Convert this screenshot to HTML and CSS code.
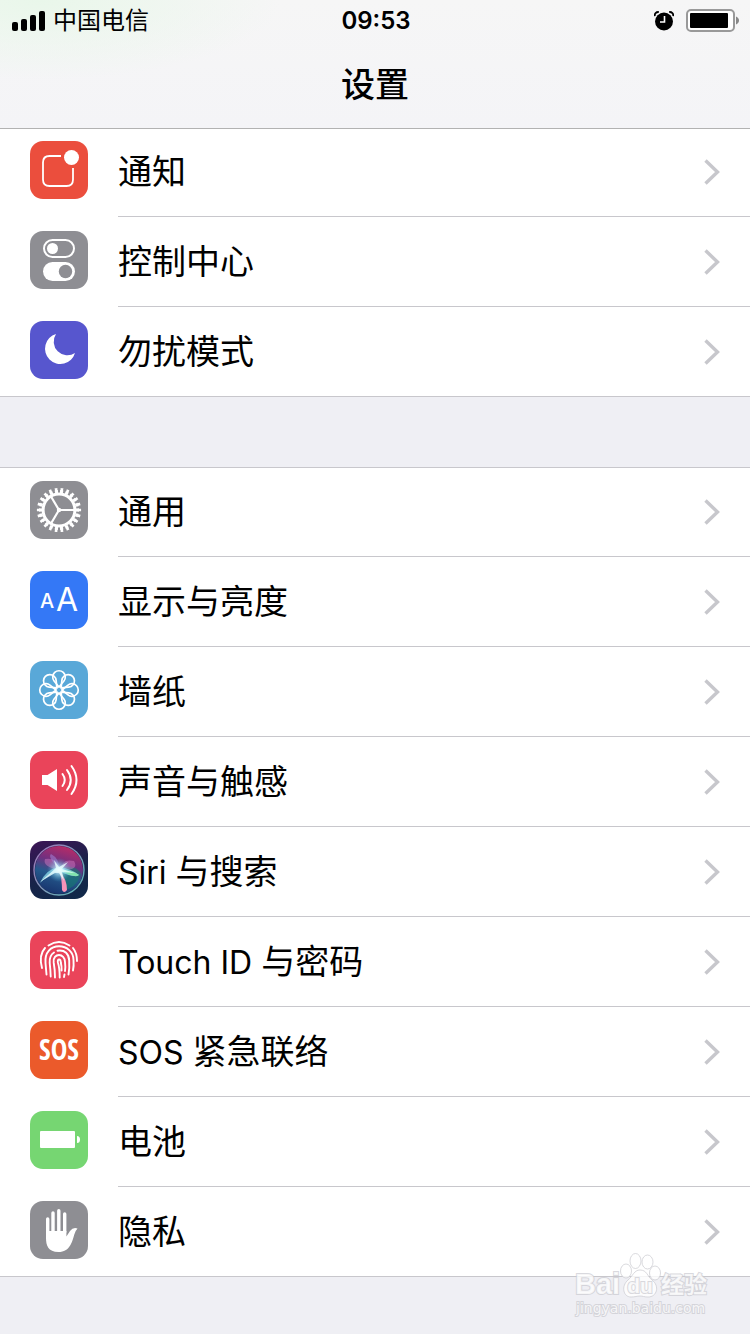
FILE: index.html
```html
<!DOCTYPE html>
<html lang="zh-CN">
<head>
<meta charset="utf-8">
<meta name="viewport" content="width=device-width, initial-scale=1">
<title>设置</title>
<link rel="stylesheet" href="styles.css">
</head>
<body>
<svg class="defs" aria-hidden="true">
  <defs>
    <symbol id="chevron" viewBox="0 0 18 28"><path d="M2.500 2.500 14.500 14 2.500 25.500" fill="none" stroke="#c7c7cc" stroke-width="3.400"/></symbol>
    <path id="petal" d="M29 26 24.100 20A6.300 6.300 0 1 1 33.900 20Z"/>
  </defs>
</svg>

<header class="header">
  <div class="status">
    <div class="status-left">
      <svg class="signal" viewBox="0 0 33 20" aria-hidden="true"><rect y="11" width="6" height="9" rx="2"/><rect x="9" y="8" width="6" height="12" rx="2"/><rect x="18" y="4" width="6" height="16" rx="2"/><rect x="27" width="6" height="20" rx="2"/></svg>
      <span class="carrier">中国电信</span>
    </div>
    <time class="clock">09:53</time>
    <div class="status-right">
      <svg class="alarm" viewBox="0 0 20 20" aria-hidden="true"><circle cx="10" cy="10.500" r="9"/><path d="M.8 5.200C.4 2.500 2 .8 4.800 1M19.200 5.200C19.600 2.500 18 .8 15.200 1" fill="none" stroke="#000" stroke-width="1.800"/><path d="M10.500 5v6H6" fill="none" stroke="#fff" stroke-width="1.600"/></svg>
      <svg class="battery" viewBox="0 0 54 24" aria-hidden="true"><rect x="1" y="1" width="47" height="21" rx="4" fill="#fff" stroke="#999" stroke-width="2"/><rect x="4" y="4" width="38" height="15" rx="1"/><path d="M50 7.500c4 1.500 4 6.500 0 8z" fill="#888"/></svg>
    </div>
  </div>
  <h1 class="title">设置</h1>
</header>

<main>
  <nav class="group group-top" aria-label="通知与模式">
    <a class="row" href="#notifications">
      <svg class="icon red" viewBox="0 0 58 58" aria-hidden="true"><path d="M31 15H19.500Q13 15 13 21.500v17q0 6.500 6.500 6.500h17q6.500 0 6.500-6.500V27" fill="none" stroke="#fff" stroke-width="1.800"/><circle cx="41.500" cy="16.500" r="7.500" fill="#fff"/></svg>
      <span class="label">通知</span><svg class="chevron" aria-hidden="true"><use href="#chevron"/></svg>
    </a>
    <a class="row" href="#control">
      <svg class="icon gray" viewBox="0 0 58 58" aria-hidden="true"><rect x="14" y="9" width="30" height="17" rx="8.500" fill="none" stroke="#fff" stroke-width="2"/><circle cx="22.500" cy="17.500" r="5.500" fill="#fff"/><rect x="13" y="31" width="32" height="19" rx="9.500" fill="#fff"/><circle cx="35.500" cy="40.500" r="6.700" fill="#8e8e93"/></svg>
      <span class="label">控制中心</span><svg class="chevron" aria-hidden="true"><use href="#chevron"/></svg>
    </a>
    <a class="row" href="#dnd">
      <svg class="icon purple" viewBox="0 0 58 58" aria-hidden="true"><path d="M26 13A15.300 15.300 0 1 0 45 32 13.700 13.700 0 0 1 26 13Z" fill="#fff"/></svg>
      <span class="label">勿扰模式</span><svg class="chevron" aria-hidden="true"><use href="#chevron"/></svg>
    </a>
  </nav>

  <nav class="group" aria-label="通用设置">
    <a class="row" href="#general">
      <svg class="icon gray" viewBox="0 0 58 58" aria-hidden="true"><g fill="none" stroke="#fff"><circle cx="29" cy="29" r="15.900" stroke-width="3"/><circle cx="29" cy="29" r="18.500" stroke-width="3" pathLength="220" stroke-dasharray="6 4" stroke-dashoffset="3"/><circle cx="29" cy="29" r="20.600" stroke-width="3" pathLength="220" stroke-dasharray="4.500 5.500" stroke-dashoffset="2.250"/><path d="M29 29H44.500M29 29 21 15.500M29 29 21 42.500" stroke-width="2.200"/></g><circle cx="29" cy="29" r="2.200" fill="#fff"/></svg>
      <span class="label">通用</span><svg class="chevron" aria-hidden="true"><use href="#chevron"/></svg>
    </a>
    <a class="row" href="#display">
      <svg class="icon blue" viewBox="0 0 58 58" aria-hidden="true"><text class="letter-small" x="10" y="37">A</text><text class="letter-large" x="26" y="40">A</text></svg>
      <span class="label">显示与亮度</span><svg class="chevron" aria-hidden="true"><use href="#chevron"/></svg>
    </a>
    <a class="row" href="#wallpaper">
      <svg class="icon sky" viewBox="0 0 58 58" aria-hidden="true"><g fill="none" stroke="#fff" stroke-width="1.700"><use href="#petal"/><use href="#petal" transform="rotate(45 29 29)"/><use href="#petal" transform="rotate(90 29 29)"/><use href="#petal" transform="rotate(135 29 29)"/><use href="#petal" transform="rotate(180 29 29)"/><use href="#petal" transform="rotate(225 29 29)"/><use href="#petal" transform="rotate(270 29 29)"/><use href="#petal" transform="rotate(315 29 29)"/><circle cx="29" cy="29" r="3.500"/></g></svg>
      <span class="label">墙纸</span><svg class="chevron" aria-hidden="true"><use href="#chevron"/></svg>
    </a>
    <a class="row" href="#sounds">
      <svg class="icon rose" viewBox="0 0 58 58" aria-hidden="true"><path d="M12 24h5.500L27 18v22l-9.500-6H12z" fill="#fff"/><path d="M32.500 23q4.500 6 0 12M37 19q7.500 10 0 20M41.500 15q10 14 0 28" fill="none" stroke="#fff" stroke-width="2" stroke-linecap="round"/></svg>
      <span class="label">声音与触感</span><svg class="chevron" aria-hidden="true"><use href="#chevron"/></svg>
    </a>
    <a class="row" href="#siri">
      <svg class="icon siri" viewBox="0 0 58 58" aria-hidden="true">
        <defs>
          <linearGradient id="orb" x1=".65" y1="0" x2=".35" y2="1"><stop stop-color="#b92b66"/><stop offset=".35" stop-color="#713080"/><stop offset=".6" stop-color="#25598c"/><stop offset="1" stop-color="#17336d"/></linearGradient>
          <linearGradient id="rim" x1="0" y1="0" x2="1" y2="1"><stop stop-color="#a471b8"/><stop offset="1" stop-color="#58b9b9"/></linearGradient>
          <radialGradient id="glow"><stop stop-color="#fff"/><stop offset=".3" stop-color="#bdf3ff" stop-opacity=".7"/><stop offset="1" stop-color="#48b6d8" stop-opacity="0"/></radialGradient>
        </defs>
        <circle cx="29" cy="29" r="24" fill="url(#orb)"/>
        <path d="M30 28Q47 22 51 34 45 48 34 49Z" fill="#177b72" opacity=".6"/>
        <path d="M30 29Q12 26 15 18q13-2 15 11Q32 17 44 20q6 10-14 9" fill="#d780c6" opacity=".45"/>
        <path d="M30 29Q17 16 21 13q8 4 9 16" fill="#a58be0" opacity=".5"/>
        <path d="M30 30Q20 32 10 42 16 28 29 26 42 28 49 34q-6 3-18-3" fill="#8fdcea" opacity=".75"/>
        <path d="M29 29q8 9 8 20-3 4-5 0 0-11-3-20Z" fill="#f793b8"/>
        <path d="M30 29q13 0 19 5-4 4-19-5" fill="#83e3ae"/>
        <circle cx="29" cy="29" r="12" fill="url(#glow)"/>
        <path d="M10 41 26 27l-2-8 5 7 9-5-6 7 13 4-13-1 2 9-5-8-4 0Z" fill="#e8ffff" opacity=".8"/>
        <circle cx="29" cy="29" r="25" fill="none" stroke="url(#rim)" stroke-width="1.400"/>
      </svg>
      <span class="label"><span class="latin">Siri </span>与搜索</span><svg class="chevron" aria-hidden="true"><use href="#chevron"/></svg>
    </a>
    <a class="row" href="#touchid">
      <svg class="icon rose" viewBox="0 0 58 58" aria-hidden="true"><g fill="none" stroke="#fff" stroke-width="1.900" stroke-linecap="round"><path d="M18.500 14.500Q29 7.500 39.500 14.500"/><path d="M15 17Q8.500 24 12 37"/><path d="M43 17Q47 22 47 30"/><path d="M16.500 43.500Q16 38 15.500 32C14.500 21 21 15.300 29 15.300S43.500 21 43.500 29q.5 6-.5 10.500"/><path d="M20.700 45.500Q20.500 39 19.700 32q-.5-7.500 4.300-10.500M27.500 19.700C35 18.500 39 23 39.200 29.500q.5 8-.7 14"/><path d="M25 46.500Q25 39 23.700 31.500C23 26.500 26 24 29 24s6 2.500 6 7q.7 6 0 9"/><path d="M29.700 46.500Q29.700 37 27.900 31.500q-.5-3 1.300-3 1.500 0 1.600 3 1 4 .8 8M34.500 43.500l-.5 2.500"/></g></svg>
      <span class="label"><span class="latin">Touch ID </span>与密码</span><svg class="chevron" aria-hidden="true"><use href="#chevron"/></svg>
    </a>
    <a class="row" href="#sos">
      <svg class="icon orange" viewBox="0 0 58 58" aria-hidden="true"><text class="sos" x="29" y="39" text-anchor="middle">SOS</text></svg>
      <span class="label"><span class="latin">SOS </span>紧急联络</span><svg class="chevron" aria-hidden="true"><use href="#chevron"/></svg>
    </a>
    <a class="row" href="#battery">
      <svg class="icon green" viewBox="0 0 58 58" aria-hidden="true"><rect x="10" y="20" width="35" height="17" rx="1" fill="#fff"/><path d="M47 25q3 0 3 3.500T47 32z" fill="#fff"/></svg>
      <span class="label">电池</span><svg class="chevron" aria-hidden="true"><use href="#chevron"/></svg>
    </a>
    <a class="row" href="#privacy">
      <svg class="icon gray" viewBox="0 0 58 58" aria-hidden="true"><path d="M17.700 18v16M23 12v20M28.800 9.800v20M34.700 13v18" stroke="#fff" stroke-width="3.400" stroke-linecap="round"/><path d="M16 30h20.400v5.500L40 30q3-4 7.500-2.500-2 2-3.200 6C42 41 40 51 28.500 51 18 51 16 44 16 37Z" fill="#fff"/></svg>
      <span class="label">隐私</span><svg class="chevron" aria-hidden="true"><use href="#chevron"/></svg>
    </a>
  </nav>
</main>

<svg class="watermark" viewBox="0 0 140 68" role="img" aria-label="Baidu 经验">
  <g class="mark">
    <ellipse cx="54" cy="21" rx="5.500" ry="7"/><ellipse cx="63.500" cy="11" rx="5.500" ry="7.500"/><ellipse cx="75.500" cy="12" rx="5.500" ry="7"/><ellipse cx="83" cy="23" rx="5.500" ry="7"/>
    <path d="M68 20c7 0 7 6 12 10 8 6 5 17-4 17-4 0-5-1-8-1s-5 1-9 1c-8 0-10-11-3-17 5-4 6-10 12-10Z"/>
    <text class="mark-name" x="3" y="44">Bai</text>
    <text class="mark-du" x="68" y="43" text-anchor="middle">du</text>
    <text class="mark-cn" x="89" y="43">经验</text>
    <text class="mark-url" x="4" y="63">jingyan.baidu.com</text>
  </g>
</svg>
</body>
</html>
```

FILE: styles.css
```css
* { box-sizing: border-box; }

body {
  position: relative;
  min-height: 100vh;
  margin: 0;
  background: #efeff4;
  color: #000;
  font-family: Inter, "Noto Sans CJK SC", sans-serif;
}

.defs { position: absolute; width: 0; height: 0; }

.header {
  position: relative;
  z-index: 1;
  margin-bottom: -2px;
  border-bottom: 1px solid #b2b2b2;
  background:
    radial-gradient(ellipse 240px 80px at 40px 0, #e9f7ea, transparent),
    linear-gradient(#f6f6f6, #f4f4f7);
}

.status {
  display: grid;
  grid-template-columns: 1fr auto 1fr;
  align-items: center;
  height: 42px;
  padding: 0 10px 0 12px;
}

.status-left, .status-right { display: flex; align-items: center; }
.status-left { gap: 8px; }
.status-right { justify-content: flex-end; gap: 12px; }
.signal { width: 33px; height: 20px; }
.carrier { font-size: 24px; line-height: 42px; }
.clock { font-size: 24px; font-weight: 600; line-height: 42px; }
.alarm { width: 20px; height: 20px; }
.battery { width: 54px; height: 24px; }

.title {
  margin: 0;
  font-size: 34px;
  font-weight: 500;
  line-height: 86px;
  text-align: center;
}

.group {
  margin-bottom: 70px;
  border-top: 1px solid #c8c7cc;
  border-bottom: 1px solid #c8c7cc;
  background: #fff;
}
.group:last-child { margin-bottom: 0; }
.group-top { border-top: 0; }

.row {
  display: flex;
  align-items: center;
  height: 90px;
  padding-left: 30px;
  color: inherit;
  text-decoration: none;
}
.row:first-child { margin-top: -1px; }
.row:last-child { margin-bottom: -1px; }
.group-top .row:first-child { margin-top: 0; }

.icon {
  flex: none;
  width: 58px;
  height: 58px;
  margin: 0 30px 4px 0;
  border-radius: 13px;
}
.red { background: #eb4e3d; }
.gray { background: #8e8e93; }
.purple { background: #5756ce; }
.blue { background: #3478f6; }
.sky { background: #59a8d8; }
.rose { background: #ea445a; }
.siri { background: linear-gradient(160deg, #3d1556, #172348 55%, #102a4a); }
.orange { background: #eb5a2b; }
.green { background: #76d672; }

.letter-small, .letter-large { fill: #fff; font-family: Inter, sans-serif; }
.letter-small { font-size: 20px; font-weight: 500; }
.letter-large { font-size: 32px; font-weight: 400; }
.sos { fill: #fff; font: bold 28px "Liberation Sans Narrow", "Open Sans Condensed", "Roboto Condensed", sans-serif; }

.label {
  flex: 1;
  height: 90px;
  border-bottom: 1px solid #c8c7cc;
  font-size: 34px;
  line-height: 90px;
}
.latin { font-size: 32px; white-space: pre; }
.row:last-child .label { border-bottom-color: transparent; }

.chevron {
  align-self: stretch;
  width: 48px;
  height: 90px;
  padding: 31px 29px 30px 1px;
  border-bottom: 1px solid #c8c7cc;
}
.row:last-child .chevron { border-bottom-color: transparent; }

.watermark {
  position: absolute;
  right: 38px;
  bottom: 16px;
  width: 140px;
  height: 68px;
}
.mark { fill: #fff; fill-opacity: 0.8; stroke: #c9c9cf; stroke-opacity: 0.7; stroke-width: 1; }
.mark text { paint-order: stroke; stroke-width: 2; }
.mark-name { font: bold 29px "Liberation Sans", sans-serif; }
.mark-du { font: bold 21px "Liberation Sans", sans-serif; }
.mark-cn { font: bold 23px "Noto Sans CJK SC", sans-serif; }
.mark-url { font: 14px "DejaVu Sans", sans-serif; }
```
